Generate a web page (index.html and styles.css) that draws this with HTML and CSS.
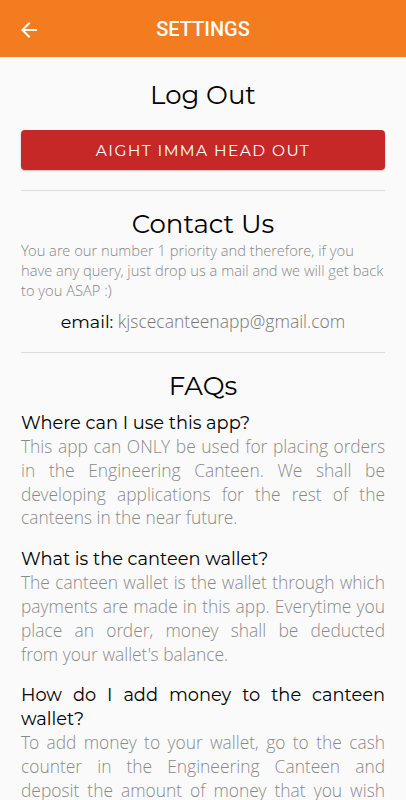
FILE: index.html
```html
<!DOCTYPE html>
<html lang="en">
<head>
    <meta charset="UTF-8">
    <meta name="viewport" content="width=device-width, initial-scale=1.0">
    <title>Settings</title>
    <link rel="stylesheet" href="styles.css">
</head>
<body>

    <header class="topbar">
        <span class="back">
            <svg width="24" height="24" viewBox="0 0 24 24"><path d="M20 11H7.83l5.59-5.59L12 4l-8 8 8 8 1.41-1.41L7.83 13H20v-2z" fill="#fff"/></svg>
        </span>
        <span class="title">SETTINGS</span>
    </header>

    <main class="content">
        <section class="block">
            <h2>Log Out</h2>
            <button class="logout">AIGHT IMMA HEAD OUT</button>
        </section>

        <hr>

        <section class="block">
            <h2 class="tight">Contact Us</h2>
            <p class="note">You are our number 1 priority and therefore, if you have any query, just drop us a mail and we will get back to you ASAP :)</p>
            <p class="email"><span class="label">email:</span> kjscecanteenapp@gmail.com</p>
        </section>

        <hr>

        <section class="block">
            <h2 class="tight">FAQs</h2>
            <div class="faq">
                <h3>Where can I use this app?</h3>
                <p>This app can ONLY be used for placing orders in the Engineering Canteen. We shall be developing applications for the rest of the canteens in the near future.</p>
            </div>
            <div class="faq">
                <h3>What is the canteen wallet?</h3>
                <p>The canteen wallet is the wallet through which payments are made in this app. Everytime you place an order, money shall be deducted from&nbsp;your wallet's balance.</p>
            </div>
            <div class="faq">
                <h3>How do I add money to the canteen wallet?</h3>
                <p>To add money to your wallet, go to the cash counter in the Engineering Canteen and deposit the amount of money that you wish to&nbsp;add to your wallet.</p>
            </div>
        </section>
    </main>

</body>
</html>
```

FILE: styles.css
```css
body {
    margin: 0;
    background-color: #fafafa;
    font-family: "Open Sans Light", "Open Sans", sans-serif;
    color: #000;
}

/* barra superior */
.topbar {
    height: 57px;
    background-color: #f47c20;
    display: flex;
    align-items: center;
    position: relative;
}

.topbar .back {
    width: 24px;
    height: 24px;
    margin-left: 17px;
    margin-top: 2px;
    display: flex;
}

.topbar .title {
    position: absolute;
    left: 0;
    right: 0;
    text-align: center;
    font-family: Roboto, sans-serif;
    font-weight: 500;
    font-size: 20px;
    color: #fff;
    pointer-events: none;
}

.content {
    padding: 0 21px;
}

.block {
    text-align: center;
}

h2 {
    font-family: Montserrat, "Noto Sans", sans-serif;
    font-weight: 400;
    font-size: 26px;
    margin: 22px 0 20px;
}

h2.tight {
    margin: 17px 0 0;
}

.logout {
    width: 100%;
    height: 40px;
    background-color: #c62828;
    color: #fff;
    border: none;
    border-radius: 4px;
    font-family: Montserrat, "Noto Sans", sans-serif;
    font-size: 15.5px;
    letter-spacing: 1.4px;
    box-shadow: 0 1px 2px rgba(0, 0, 0, 0.25);
    margin-top: -1px;
    margin-bottom: 20px;
}

hr {
    border: none;
    border-top: 1px solid #ddd;
    margin: 0;
}

.note {
    text-align: left;
    font-weight: 300;
    font-size: 14.7px;
    line-height: 20px;
    color: #888;
    margin: 0;
}

.email {
    font-weight: 300;
    font-size: 17.5px;
    color: #777;
    margin: 9px 0 19px;
}

.email .label {
    font-family: Montserrat, "Noto Sans", sans-serif;
    font-weight: 400;
    color: #000;
}

.faq {
    text-align: justify;
    margin-top: 9px;
    margin-bottom: 17px;
}

.faq + .faq {
    margin-top: 4px;
}

.faq h3 {
    font-family: Montserrat, "Noto Sans", sans-serif;
    font-weight: 400;
    font-size: 17.8px;
    line-height: 24px;
    margin: 0;
}

.faq p {
    font-weight: 300;
    font-size: 17.4px;
    line-height: 23.8px;
    color: #8a8a8a;
    margin: 0;
}
```
